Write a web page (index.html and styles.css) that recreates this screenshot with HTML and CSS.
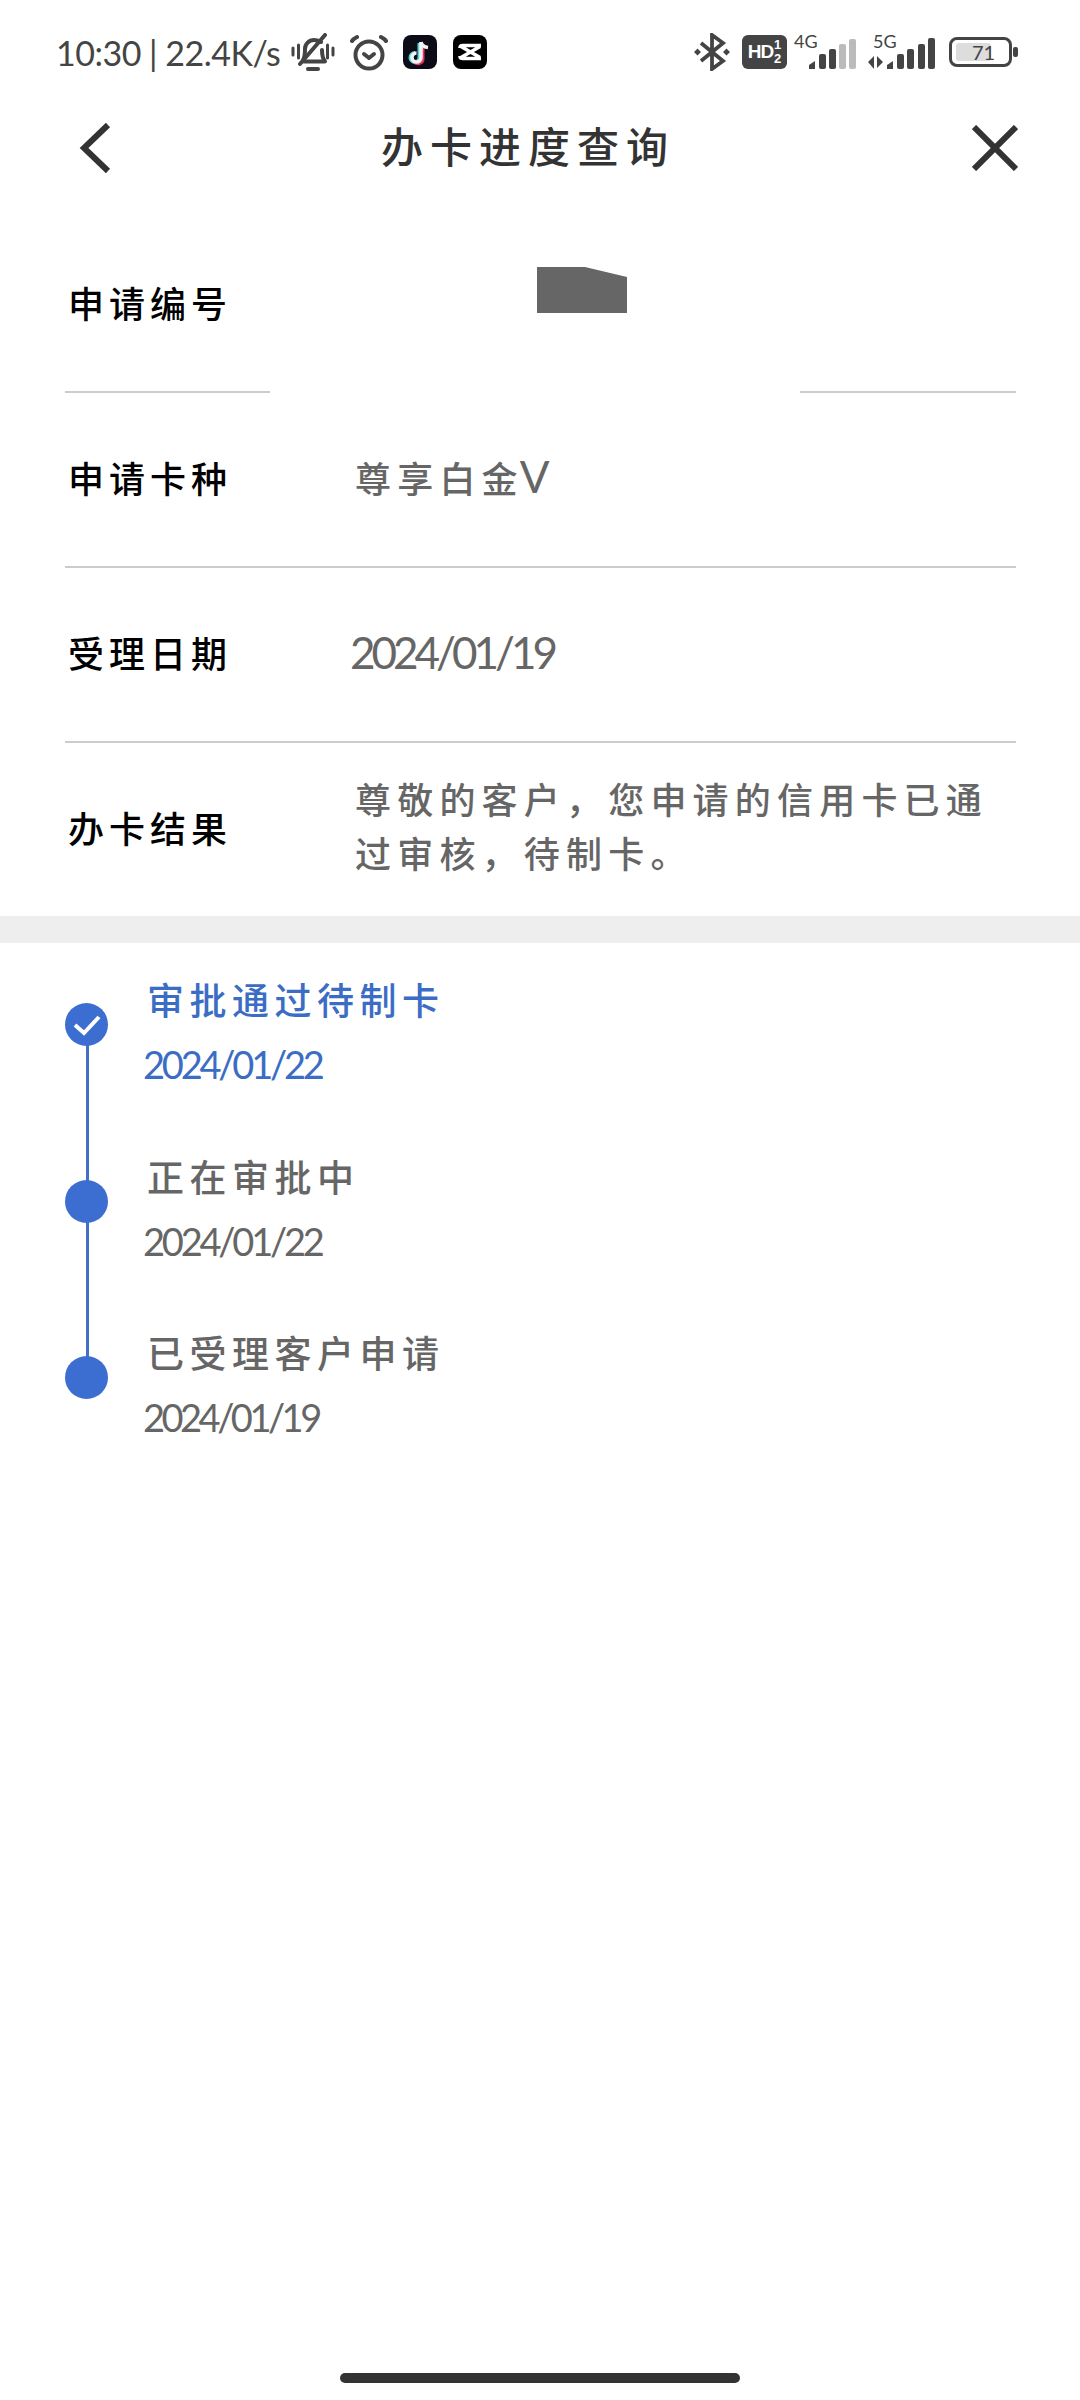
FILE: index.html
```html
<!DOCTYPE html>
<html lang="zh">
<head>
<meta charset="utf-8">
<title>办卡进度查询</title>
<link rel="stylesheet" href="styles.css">
</head>
<body>
<div class="page">
  <header class="status">
    <div class="status-left">
      <span class="status-text">10:30 | 22.4K/s</span>
      <svg class="ic-bell" viewBox="0 0 44 39"><g fill="none" stroke="#444" stroke-width="4" stroke-linecap="round" stroke-linejoin="round"><path d="M2 15v7M7.500 12v13M36.500 12v13M42 15v7" stroke-width="3"/><path d="M12 27c2-3 2-7 2-11 0-5 4-9 9-9 3 0 5 1 7 2"/><path d="M31 17c0 5 1 9 3 11.500H13"/><path d="M9 31L34 2"/><path d="M17 36h10"/></g></svg>
      <svg class="ic-alarm" viewBox="0 0 38 37"><g fill="none" stroke="#444" stroke-width="4" stroke-linecap="round" stroke-linejoin="round"><circle cx="19" cy="21" r="13.500"/><path d="M2 7c1-2 3-3 5-4M36 7c-1-2-3-3-5-4"/><path d="M14 20l5 4 5-4"/></g></svg>
      <svg class="ic-app" viewBox="0 0 34 34"><rect width="34" height="34" rx="8" fill="#0c0c18"/><path d="M16.500 8v14.500a4.500 4.500 0 1 1-4.500-4.500" fill="none" stroke="#4fd5dc" stroke-width="4"/><path d="M19.500 9v14.500a4.500 4.500 0 0 1-8 3" fill="none" stroke="#e8365a" stroke-width="4"/><path d="M18 7v15.500a4.500 4.500 0 1 1-4.500-4.500" fill="none" stroke="#f3f3f3" stroke-width="3.600"/><path d="M18 7c.5 3 3 5 7 5.500" fill="none" stroke="#f3f3f3" stroke-width="3.600"/></svg>
      <svg class="ic-app" viewBox="0 0 34 34"><rect width="34" height="34" rx="8" fill="#000"/><path d="M7 13c0-2 1-2.500 3-2.500h18M7 21c0 2 1 2.500 3 2.500h18M8 11.500L27 22.500M8 22.500L27 11.500" fill="none" stroke="#fff" stroke-width="3.600"/></svg>
    </div>
    <div class="status-right">
      <svg class="ic-bt" viewBox="0 0 36 38"><path d="M7 10l22 18-11 8V2l11 8L7 28" fill="none" stroke="#444" stroke-width="3.800"/><path d="M0 19l3.500-3.500L7 19l-3.500 3.500zM29 19l3.500-3.500L36 19l-3.500 3.500z" fill="#444"/></svg>
      <div class="hd"><span class="hd-main">HD</span><span class="hd-sub"><span>1</span><span>2</span></span></div>
      <div class="net">
        <span class="net-label">4G</span>
        <svg class="bars" viewBox="0 0 47 31"><path d="M0 31v-4l6-4v8z" fill="#444"/><rect x="10" y="16" width="7" height="15" rx="2" fill="#444"/><rect x="20" y="11" width="7" height="20" rx="2" fill="#444"/><rect x="30" y="6" width="7" height="25" rx="2" fill="#bbb"/><rect x="40" y="1" width="7" height="30" rx="2" fill="#bbb"/></svg>
      </div>
      <div class="net net-5g">
        <span class="net-label">5G</span>
        <svg class="bars-5g" viewBox="0 0 67 31"><path d="M0 24l6-6v13zM9 18v12l6-6z" fill="#444"/><path d="M19 31v-4l6-4v8z" fill="#444"/><rect x="29" y="16" width="7" height="15" rx="2" fill="#444"/><rect x="39" y="11" width="7" height="20" rx="2" fill="#444"/><rect x="50" y="6" width="7" height="25" rx="2" fill="#444"/><rect x="60" y="0" width="7" height="31" rx="2" fill="#444"/></svg>
      </div>
      <div class="battery">
        <div class="batt-body"><span class="batt-fill"></span><span class="batt-num">71</span></div>
        <span class="batt-tip"></span>
      </div>
    </div>
  </header>

  <nav class="topbar">
    <svg class="nav-ic" viewBox="0 0 34 52"><path d="M29 3L5 26l24 23" fill="none" stroke="#333" stroke-width="6"/></svg>
    <h1 class="title">办卡进度查询</h1>
    <svg class="nav-ic nav-close" viewBox="0 0 46 46"><path d="M2 2l42 42M44 2L2 44" fill="none" stroke="#333" stroke-width="6"/></svg>
  </nav>

  <section class="info">
    <div class="row row-masked">
      <div class="label">申请编号</div>
      <div class="value"></div>
      <span class="mask-white"></span>
      <svg class="mask-dark" viewBox="0 0 90 46"><path d="M0 0h48l42 10v36H0z" fill="#666"/></svg>
    </div>
    <div class="row">
      <div class="label">申请卡种</div>
      <div class="value">尊享白金<span class="latin">V</span></div>
    </div>
    <div class="row">
      <div class="label">受理日期</div>
      <div class="value value-date">2024/01/19</div>
    </div>
    <div class="row row-last">
      <div class="label">办卡结果</div>
      <div class="value value-wrap">尊敬的客户，您申请的信用卡已通过审核，待制卡。</div>
    </div>
  </section>

  <div class="band"></div>

  <section class="timeline">
    <div class="step step-active">
      <div class="node"><span class="dot"><svg class="tick" viewBox="0 0 30 22"><path d="M3 11l9 8L27 3" fill="none" stroke="#fff" stroke-width="4"/></svg></span></div>
      <div class="step-body">
        <div class="step-title">审批通过待制卡</div>
        <div class="step-date">2024/01/22</div>
      </div>
    </div>
    <div class="step">
      <div class="node"><span class="dot"></span></div>
      <div class="step-body">
        <div class="step-title">正在审批中</div>
        <div class="step-date">2024/01/22</div>
      </div>
    </div>
    <div class="step step-end">
      <div class="node"><span class="dot"></span></div>
      <div class="step-body">
        <div class="step-title">已受理客户申请</div>
        <div class="step-date step-date-narrow">2024/01/19</div>
      </div>
    </div>
  </section>

  <div class="home-indicator"></div>
</div>
</body>
</html>
```

FILE: styles.css
```css
* { box-sizing: border-box; margin: 0; padding: 0; }
html, body { background: #fff; }
body { font-family: "Noto Sans CJK SC", "Noto Sans", sans-serif; }
.page { position: relative; width: 1080px; height: 2400px; overflow: hidden; background: #fff; }

.status { height: 105px; padding: 31px 62px 0 56px; display: flex; justify-content: space-between; align-items: flex-start; }
.status-left, .status-right { display: flex; align-items: center; height: 42px; }
.status-text { font-family: "Lato", sans-serif; font-size: 34px; letter-spacing: -0.5px; color: #444; white-space: nowrap; margin-right: 11px; }
.ic-bell { width: 44px; height: 39px; margin-right: 15px; }
.ic-alarm { width: 38px; height: 37px; margin-right: 15px; }
.ic-app { width: 34px; height: 34px; margin-right: 16px; }
.ic-app:last-child { margin-right: 0; }

.ic-bt { width: 36px; height: 38px; margin-right: 12px; }
.hd { width: 45px; height: 34px; background: #444; border-radius: 6px; display: flex; align-items: center; justify-content: center; color: #fff; font-family: "Liberation Sans", sans-serif; font-weight: 700; margin-right: 7px; }
.hd-main { font-size: 19px; letter-spacing: -1px; }
.hd-sub { display: flex; flex-direction: column; font-size: 13px; line-height: 14px; margin-left: 1px; }
.net { position: relative; width: 62px; height: 42px; margin-right: 12px; }
.net-5g { width: 67px; margin-right: 14px; }
.net-label { position: absolute; left: 0; top: 0; font-family: "Lato", sans-serif; font-size: 18px; line-height: 20px; color: #444; }
.net-5g .net-label { left: 5px; }
.bars { position: absolute; right: 0; bottom: 4px; width: 47px; height: 31px; }
.bars-5g { position: absolute; right: 0; bottom: 4px; width: 67px; height: 31px; }
.battery { display: flex; align-items: center; gap: 1px; }
.batt-body { position: relative; width: 63px; height: 30px; border: 3px solid #444; border-radius: 8px; }
.batt-fill { position: absolute; left: 4px; top: 3px; bottom: 3px; width: 35px; background: #ddd; border-radius: 3px; }
.batt-num { position: absolute; left: 20px; top: 0; font-family: "Lato", sans-serif; font-size: 20px; line-height: 24px; color: #444; }
.batt-tip { width: 5px; height: 10px; background: #444; border-radius: 2px; }

.topbar { position: relative; height: 80px; padding: 6px 62px 0 79px; display: flex; justify-content: space-between; align-items: center; }
.nav-ic { width: 34px; height: 52px; }
.nav-close { width: 46px; height: 46px; }
.title { position: absolute; left: 0; right: 0; top: 0; text-align: center; font-size: 42px; line-height: 80px; letter-spacing: 7px; font-weight: 500; color: #333; padding-right: 24px; }

.info { padding: 0 64px 0 65px; margin-top: 33px; }
.row { position: relative; display: flex; height: 175px; border-bottom: 2px solid #ccc; align-items: center; padding: 0 0 6px 3px; }
.row-last { border-bottom: none; height: 173px; }
.label { width: 287px; flex: none; font-size: 36px; font-weight: 500; letter-spacing: 5px; color: #000; }
.value { flex: 1; font-size: 36px; font-weight: 500; letter-spacing: 6.2px; color: #666; line-height: 54px; }
.latin { font-family: "Lato", sans-serif; font-size: 44px; font-weight: 400; letter-spacing: 0; line-height: 40px; margin-left: -4px; }
.value-date { font-family: "Lato", sans-serif; font-size: 44px; font-weight: 400; letter-spacing: -4px; margin-left: -5px; }
.value-wrap { margin-bottom: 4px; }
.mask-white { position: absolute; left: 205px; width: 530px; bottom: -2px; height: 2px; background: #fff; }
.mask-dark { position: absolute; left: 472px; top: 49px; width: 90px; height: 46px; }

.band { height: 27px; background: #eee; }

.timeline { padding: 0 0 0 65px; }
.step { display: flex; height: 176.5px; }
.node { position: relative; width: 43px; flex: none; margin-right: 36px; }
.node::after { content: ""; position: absolute; left: 21px; top: 81px; width: 3px; height: 178px; background: #4470c4; }
.step-end .node::after { display: none; }
.dot { position: absolute; left: 0; top: 60px; width: 43px; height: 43px; border-radius: 50%; background: #3c6dd0; display: flex; align-items: center; justify-content: center; z-index: 1; }
.tick { width: 30px; height: 22px; }
.step-body { padding-top: 29px; }
.step-title { font-size: 37px; font-weight: 500; line-height: 54px; letter-spacing: 5.5px; color: #666; margin-left: 3px; }
.step-date { font-family: "Lato", sans-serif; font-size: 38px; letter-spacing: -3.200px; line-height: 46px; margin-top: 15px; margin-left: -1px; color: #666; }
.step-date-narrow { letter-spacing: -3.500px; }
.step-active .step-title, .step-active .step-date { color: #3c6dc4; }

.home-indicator { position: absolute; left: 340px; bottom: 17px; width: 400px; height: 10px; border-radius: 5px; background: #333; }
```
